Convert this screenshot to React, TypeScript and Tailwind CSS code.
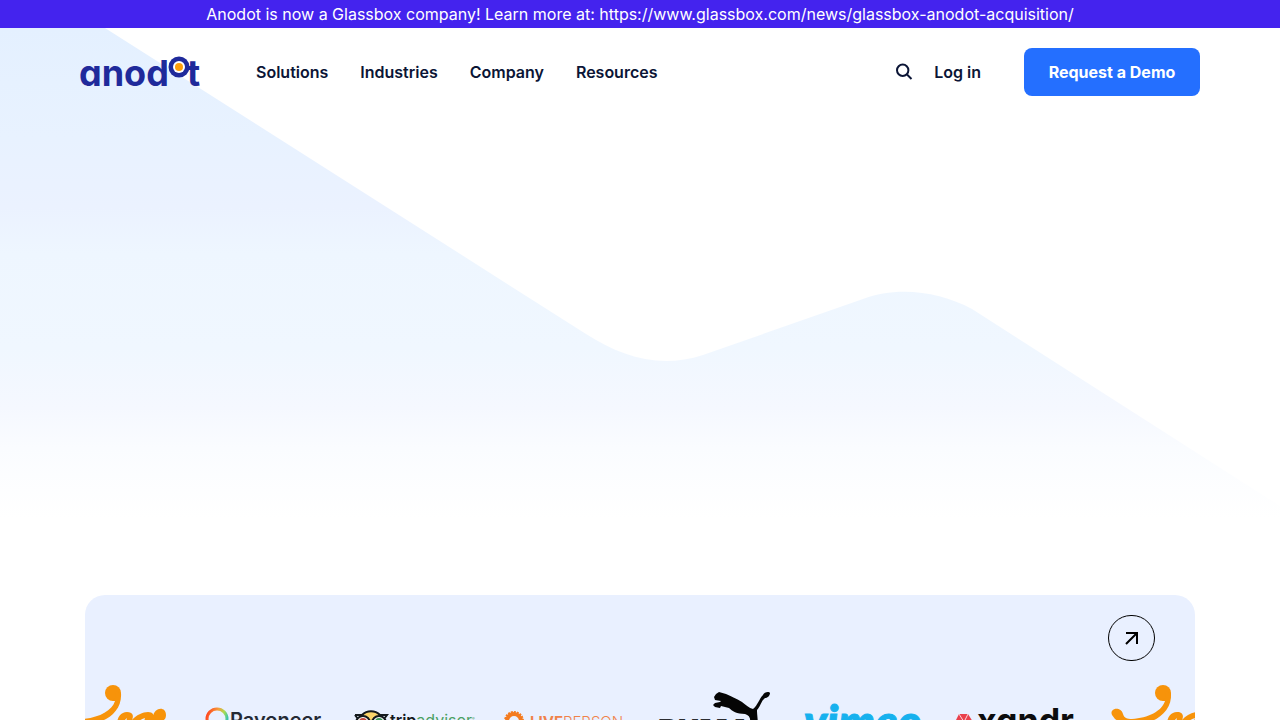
import type { ReactNode } from 'react';

const navItems = ['Solutions', 'Industries', 'Company', 'Resources'];

function AnodotLogo() {
  return (
    <svg viewBox="0 0 120 32" className="h-8 w-[120px] overflow-visible" role="img" aria-label="Anodot">
      <g fill="#1f2a9b" className="font-['Inter'] text-[36px] font-bold [font-feature-settings:'cv11']">
        <text x="-1" y="30">anod</text>
        <text x="107" y="30">t</text>
      </g>
      <circle cx="99" cy="11" r="10.5" fill="#1f2a9b" />
      <circle cx="99" cy="11" r="6" fill="#fff" />
      <circle cx="99" cy="11" r="4" fill="#ff9f0a" />
    </svg>
  );
}

function HeroBackground() {
  return (
    <svg
      viewBox="0 0 1280 500"
      preserveAspectRatio="none"
      className="absolute inset-x-0 top-0 -z-10 h-[500px] w-full"
      aria-hidden="true"
    >
      <defs>
        <linearGradient id="hero-fade" x1="0" y1="0" x2="0" y2="1">
          <stop offset="0" stopColor="#e4f0ff" />
          <stop offset="0.22" stopColor="#e8f2ff" />
          <stop offset="0.36" stopColor="#ebf2ff" />
          <stop offset="0.45" stopColor="#eef6ff" />
          <stop offset="0.64" stopColor="#f0f7ff" />
          <stop offset="0.76" stopColor="#f5f8ff" />
          <stop offset="0.84" stopColor="#fafcff" />
          <stop offset="0.98" stopColor="#ffffff" />
        </linearGradient>
      </defs>
      <path
        d="M0 0H105L586 306C622 329 660 341 703 327L863 271C897 258 939 263 972 281L1280 478V500H0Z"
        fill="url(#hero-fade)"
      />
    </svg>
  );
}

function LogoFrame({ label, children }: { label: string; children: ReactNode }) {
  return (
    <li className="flex w-[150px] shrink-0 justify-center">
      <svg viewBox="0 0 120 80" className="h-20 w-[120px] overflow-visible" role="img" aria-label={label}>
        {children}
      </svg>
    </li>
  );
}

function SwirlLogo() {
  return (
    <LogoFrame label="Customer">
      <g fill="#f7930a">
        <circle cx="58" cy="12" r="8" />
        <path d="M57 20C61 18 61 15 61 10L66 12C67 25 59 35 47 40C36 45 22 47 10 38L7 34C4 27 16 25 18 33C19 37 22 38 27 38C43 37 57 30 60 20Z" />
        <path d="M62 44C62 36 66 31 72 31C78 31 79 35 77 39C81 34 88 31 93 31C98 31 99 34 98 36C99 26 111 25 111 34C111 41 104 41 99 39L94 54H85L90 37C84 38 80 45 77 54H68L72 37C69 39 68 43 67 48Z" />
      </g>
    </LogoFrame>
  );
}

function PayoneerLogo() {
  return (
    <LogoFrame label="Payoneer">
      <defs>
        <linearGradient id="ring" x1="0" x2="1" y1="0.3" y2="0.6">
          <stop offset="0" stopColor="#ff4b22" />
          <stop offset="0.45" stopColor="#f5a03c" />
          <stop offset="0.75" stopColor="#a8dc52" />
          <stop offset="1" stopColor="#35c4b0" />
        </linearGradient>
      </defs>
      <circle cx="12" cy="38" r="10" fill="none" stroke="url(#ring)" strokeWidth="3" />
      <text x="25" y="46" fill="#242a35" className="font-['Inter'] text-[20px] font-semibold">
        Payoneer
      </text>
    </LogoFrame>
  );
}

function TripadvisorLogo() {
  return (
    <LogoFrame label="Tripadvisor">
      <path d="M5 35Q16 25 28 35L16 46Z" fill="#fbd46a" />
      <path d="M0 34H7C12 29 20 29 25 34H32L29 38M0 34L3 38" fill="none" stroke="#14191d" strokeWidth="2" />
      <g fill="#fff" stroke="#14191d" strokeWidth="2">
        <circle cx="8" cy="42" r="7" />
        <circle cx="24" cy="42" r="7" />
      </g>
      <circle cx="8" cy="41" r="3" fill="none" stroke="#c2453b" strokeWidth="2" />
      <circle cx="24" cy="41" r="3" fill="none" stroke="#3f9a59" strokeWidth="2" />
      <text x="35" y="45" fill="#14191d" className="font-['Inter'] text-[16px] font-semibold">
        trip<tspan fill="#4ba063" fontWeight="400">advisor</tspan>
      </text>
      <text x="117" y="39" fill="#4ba063" className="font-['Inter'] text-[4px]">®</text>
    </LogoFrame>
  );
}

function LivePersonLogo() {
  return (
    <LogoFrame label="LivePerson">
      <circle cx="9" cy="40" r="7" fill="none" stroke="#f47b20" strokeWidth="4" />
      <circle cx="9" cy="40" r="9" fill="none" stroke="#f47b20" strokeWidth="2" strokeDasharray="2 1" />
      <text x="25" y="46" fill="#f0824a" className="font-['Inter'] text-[15px] font-bold">
        LIVE<tspan fontWeight="300">PERSON</tspan>
      </text>
    </LogoFrame>
  );
}

function PumaLogo() {
  return (
    <LogoFrame label="Puma">
      <text x="3" y="60" fill="#2b2d31" className="font-['Inter'] text-[30px] font-black">
        PUMA
      </text>
      <path
        d="M59 16L61 13L64 11L71 13C76 15 82 18 87 21C91 24 94 27 98 28C103 24 104 18 108 14C109 11 114 10 115 12C115 15 112 17 110 17C106 20 106 25 102 29C102 34 103 38 103 46L95 42C96 37 94 34 90 33C82 33 77 30 74 27L66 25L65 27L60 26L58 24L60 22L65 21L66 20L60 19Z"
        fill="#050505"
      />
    </LogoFrame>
  );
}

function VimeoLogo() {
  return (
    <LogoFrame label="Vimeo">
      <text
        x="-1"
        y="57"
        fill="#16b1ee"
        stroke="#16b1ee"
        strokeWidth="1"
        className="font-['Lato'] text-[46px] font-black italic"
      >
        vimeo
      </text>
    </LogoFrame>
  );
}

function XandrLogo() {
  return (
    <LogoFrame label="Xandr">
      <path d="M4 33H13L18 41L13 49H4L0 41Z" fill="#e9404c" />
      <path d="M4 33L9 41L13 33M0 41H18M4 49L9 41L13 49" fill="none" stroke="#fbd5dc" strokeWidth="1" />
      <text x="22" y="52" fill="#0c0c0e" className="font-['Inter'] text-[34px] font-bold [font-feature-settings:'cv11']">
        xandr
      </text>
    </LogoFrame>
  );
}

export default function App() {
  return (
    <div className="relative isolate min-h-screen overflow-hidden bg-white font-['Inter',sans-serif] text-[#0b1536]">
      {/* Announcement */}
      <div className="flex h-7 items-center justify-center bg-[#4423ee] text-white">
        <a href="#news" className="text-base">
          Anodot is now a Glassbox company! Learn more at: https://www.glassbox.com/news/glassbox-anodot-acquisition/
        </a>
      </div>

      <div className="relative">
        <HeroBackground />

        <header className="mx-auto flex max-w-[1120px] items-center py-5">
          <a href="#home">
            <AnodotLogo />
          </a>
          <nav className="ml-14 flex gap-8">
            {navItems.map((item) => (
              <a key={item} href={`#${item.toLowerCase()}`} className="font-semibold">
                {item}
              </a>
            ))}
          </nav>
          <div className="ml-auto flex items-center">
            <button type="button" aria-label="Search" className="mr-[22px]">
              <svg viewBox="0 0 16 16" className="size-4 overflow-visible" fill="none" stroke="currentColor" strokeWidth="2">
                <circle cx="6.7" cy="6.2" r="5.7" />
                <path d="M11 10.5L15.5 15" />
              </svg>
            </button>
            <a href="#login" className="mr-[43px] font-semibold">
              Log in
            </a>
            <button type="button" className="h-12 w-44 rounded-lg bg-[#246fff] font-bold text-white">
              Request a Demo
            </button>
          </div>
        </header>

        {/* Hero area */}
        <section className="h-[479px]" />
      </div>

      {/* Customers */}
      <section className="mx-auto max-w-[1110px] overflow-hidden rounded-[20px] bg-[#e9f0ff] pt-5 pb-10">
        <div className="flex justify-end pr-10">
          <a
            href="#customers"
            aria-label="View customers"
            className="flex h-[46px] w-[47px] items-center justify-center rounded-full border border-black text-black"
          >
            <svg viewBox="0 0 14 14" className="size-3.5" fill="none" stroke="currentColor" strokeWidth="2">
              <path d="M1 13L12 2M1 2H12V13" />
            </svg>
          </a>
        </div>
        <ul className="mt-5 flex justify-center">
          <SwirlLogo />
          <PayoneerLogo />
          <TripadvisorLogo />
          <LivePersonLogo />
          <PumaLogo />
          <VimeoLogo />
          <XandrLogo />
          <SwirlLogo />
        </ul>
      </section>
    </div>
  );
}
